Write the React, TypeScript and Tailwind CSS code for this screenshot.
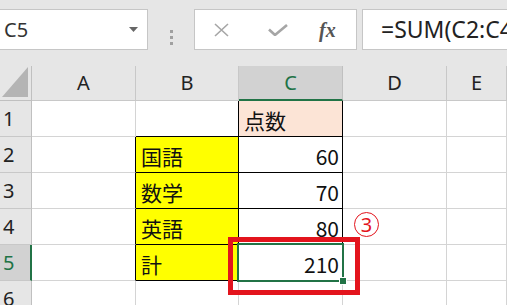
import type React from "react"

const cellFont = { fontFamily: '"Noto Sans CJK JP", "Noto Sans", sans-serif' }

type Cell = {
  text?: string
  align?: "left" | "right"
  bg?: string
  rb?: boolean // right border black
  bb?: boolean // bottom border black
}

const rows: Cell[][] = [
  [{}, { rb: true, bb: true }, { text: "点数", bg: "bg-[#fce4d6]", rb: true, bb: true }, {}, {}],
  [{ rb: true }, { text: "国語", bg: "bg-[#ffff00]", rb: true, bb: true }, { text: "60", align: "right", rb: true, bb: true }, {}, {}],
  [{ rb: true }, { text: "数学", bg: "bg-[#ffff00]", rb: true, bb: true }, { text: "70", align: "right", rb: true, bb: true }, {}, {}],
  [{ rb: true }, { text: "英語", bg: "bg-[#ffff00]", rb: true, bb: true }, { text: "80", align: "right", rb: true, bb: true }, {}, {}],
  [{ rb: true }, { text: "計", bg: "bg-[#ffff00]", rb: true, bb: true }, { text: "210", align: "right", rb: true, bb: true }, {}, {}],
  [{}, {}, {}, {}, {}],
]

function GridCell({ cell, selected }: { cell: Cell; selected?: boolean }) {
  return (
    <div
      className={`relative flex items-center h-full border-r border-b text-[21px] text-[#111] ${cell.bg ?? "bg-white"} ${
        cell.rb ? "border-r-black" : "border-r-[#d4d4d4]"
      } ${cell.bb ? "border-b-black" : "border-b-[#d4d4d4]"} ${cell.align === "right" ? "justify-end pr-[3px]" : "pl-[5px]"}`}
      style={cellFont}
    >
      <span className="leading-none pt-[3px]">{cell.text}</span>
      {selected && (
        <div className="absolute z-10 left-[-2px] top-[-2px] right-[-2px] bottom-[-2px] border-2 border-[#217346]">
          <div className="absolute right-[-5px] bottom-[-5px] w-[8px] h-[8px] bg-[#217346] border border-white" />
        </div>
      )}
    </div>
  )
}

export default function App() {
  const cols = ["A", "B", "C", "D", "E"]

  return (
    <div className="relative w-[507px] h-[305px] overflow-hidden bg-[#e6e6e6]" style={{ fontFamily: '"Noto Sans", "Open Sans", sans-serif' }}>
      {/* formula bar */}
      <div className="flex h-[66px] pt-[9px]">
        <div className="relative w-[148px] h-[41px] bg-white border border-l-0 border-[#c6c6c6] flex items-center pl-[4px]">
          <span className="text-[20px] text-[#333] leading-none">C5</span>
          <svg className="absolute right-[9px] top-[17px]" width="9" height="5" viewBox="0 0 9 5">
            <polygon points="0,0 9,0 4.5,5" fill="#666" />
          </svg>
        </div>
        <div className="w-[46px] flex flex-col items-center justify-center gap-[3px] pb-[1px]">
          <div className="w-[3px] h-[3px] bg-[#a0a0a0]" />
          <div className="w-[3px] h-[3px] bg-[#a0a0a0]" />
          <div className="w-[3px] h-[3px] bg-[#a0a0a0]" />
        </div>
        <div className="w-[163px] h-[41px] bg-white border border-[#c6c6c6] flex items-center">
          <svg className="ml-[19px]" width="15" height="14" viewBox="0 0 15 14">
            <path d="M1 1 L14 13 M14 1 L1 13" stroke="#a6a6a6" strokeWidth="1.6" fill="none" />
          </svg>
          <svg className="ml-[39px]" width="20" height="12" viewBox="0 0 20 12">
            <path d="M1 5.5 L7 11 L19 1" stroke="#a6a6a6" strokeWidth="2.6" fill="none" />
          </svg>
          <span
            className="ml-[31px] text-[20px] italic font-bold text-[#555] leading-none"
            style={{ fontFamily: '"Liberation Serif", "DejaVu Serif", serif' }}
          >
            fx
          </span>
        </div>
        <div className="ml-[5px] flex-1 h-[41px] bg-white border border-r-0 border-[#c6c6c6] flex items-center pl-[18px] overflow-hidden">
          <span className="text-[23px] text-[#222] leading-none whitespace-nowrap">=SUM(C2:C4)</span>
        </div>
      </div>

      {/* grid */}
      <div className="grid grid-cols-[32px_104px_103px_104px_104px_1fr] grid-rows-[35px_36px_36px_36px_36px_36px_36px]">
        <div className="relative border-r border-b border-[#c0c0c0] bg-[#e6e6e6]">
          <svg className="absolute right-[3px] bottom-[3px]" width="26" height="30" viewBox="0 0 26 30">
            <polygon points="26,0 26,30 0,30" fill="#b4b4b4" />
          </svg>
        </div>
        {cols.map((c) => (
          <div
            key={c}
            className={`flex items-center justify-center text-[20px] leading-none ${
              c === "C"
                ? "bg-[#d2d2d2] text-[#217346] border-r border-r-[#c0c0c0] border-b-2 border-b-[#217346]"
                : "bg-[#e6e6e6] text-[#222] border-r border-b border-[#c8c8c8]"
            }`}
          >
            {c}
          </div>
        ))}

        {rows.map((row, i) => {
          const n = i + 1
          const sel = n === 5
          return [
            <div
              key={`h${n}`}
              className={`flex items-center pl-[3px] text-[20px] leading-none border-b border-[#c8c8c8] ${
                sel ? "bg-[#d2d2d2] text-[#217346] border-r-2 border-r-[#217346]" : "bg-[#e6e6e6] text-[#222] border-r border-r-[#c0c0c0]"
              }`}
            >
              {n}
            </div>,
            ...row.map((cell, j) => <GridCell key={`c${n}-${j}`} cell={cell} selected={sel && j === 2} />),
          ]
        })}
      </div>

      {/* annotations */}
      <div className="absolute z-20 left-[228px] top-[237px] w-[132px] h-[58px] border-[5px] border-[#e3141d]" />
      <div className="absolute z-20 left-[354px] top-[212px] w-[25px] h-[25px] rounded-full border-[1.5px] border-[#e3141d] flex items-center justify-center text-[#e3141d] text-[20px] leading-none">
        3
      </div>
    </div>
  )
}
